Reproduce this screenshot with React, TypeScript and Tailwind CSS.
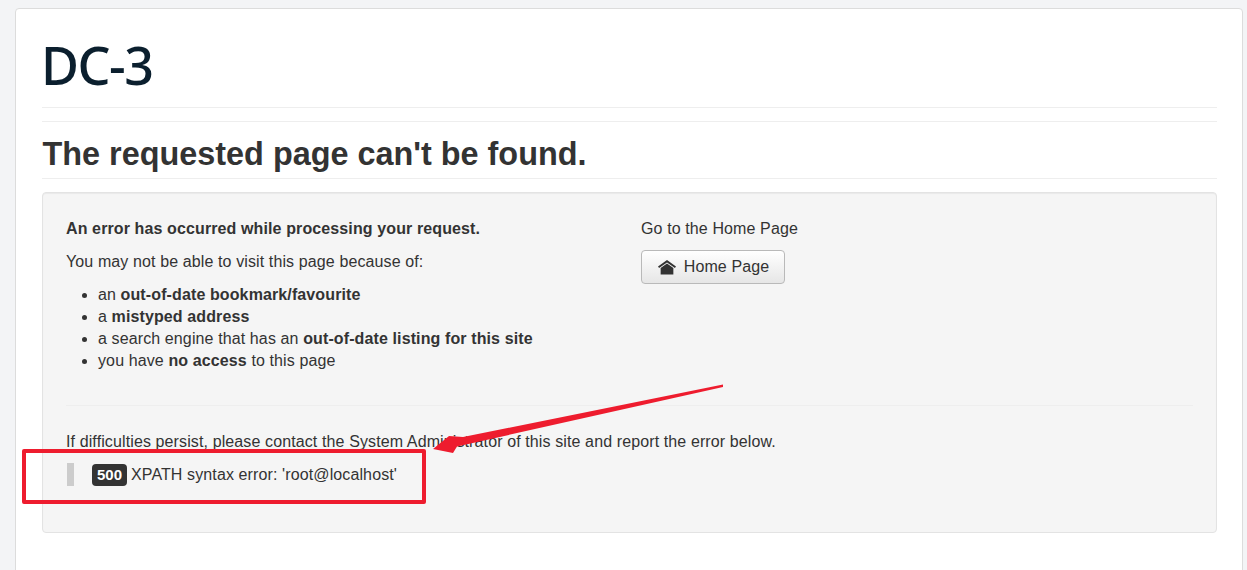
const sans = "font-['Liberation_Sans',Arial,sans-serif]"

function HomeIcon() {
  return (
    <svg width="18" height="15" viewBox="0 0 17 15" preserveAspectRatio="none" className="shrink-0 fill-[#333]">
      <path d="M8.5 0 L17 6.6 L16 8 L8.5 2.4 L1 8 L0 6.6 Z" />
      <path d="M8.5 3.6 L14.5 8 V14.5 H2.5 V8 Z" />
    </svg>
  )
}

function Annotation() {
  return (
    <>
      <div className="absolute left-[22px] top-[449px] h-[55px] w-[404px] rounded-[2px] border-[4px] border-[#ee1c2e]" />
      <svg className="absolute left-0 top-0" width="1247" height="570" viewBox="0 0 1247 570">
        <polygon points="723,384.5 723,387 457,446.5 453,453 433,449 449,436 463,437" fill="#ee1c2e" />
      </svg>
    </>
  )
}

export default function App() {
  return (
    <div className={`relative h-[570px] overflow-hidden bg-[#f3f4f6] pl-[15px] pr-[4px] pt-[8px] text-[#333] ${sans}`}>
      <div className="h-[600px] rounded-[4px] border border-[#dcdcdc] bg-white pl-[26px] pr-[25px] pt-[28px]">
        <div className="h-[71px] border-b border-[#eeeeee]">
          <div className="-ml-[1px] font-['Noto_Sans',sans-serif] text-[52px] font-medium leading-[56px] tracking-[-1.5px] text-[#0b1f2e]">DC-3</div>
        </div>
        <div className="mt-[13px] border-t border-[#eeeeee]">
          <h1 className="h-[57px] border-b border-[#eeeeee] pl-[0.5px] pt-[12px] text-[32.4px] font-bold leading-[40px]">
            The requested page can't be found.
          </h1>
        </div>
        <div className="mt-[13px] h-[341px] rounded-[4px] border border-[#e3e3e3] bg-[#f5f5f5] px-[23px] pt-[25px] text-[16px] leading-[22px] tracking-[0.115px] shadow-[inset_0_1px_1px_rgba(0,0,0,0.05)]">
          <div className="flex">
            <div className="w-[575px]">
              <p className="font-bold">An error has occurred while processing your request.</p>
              <p className="mt-[11px]">You may not be able to visit this page because of:</p>
              <ul className="mt-[11px] list-disc pl-[32px]">
                <li>an <b>out-of-date bookmark/favourite</b></li>
                <li>a <b>mistyped address</b></li>
                <li>a search engine that has an <b>out-of-date listing for this site</b></li>
                <li>you have <b>no access</b> to this page</li>
              </ul>
            </div>
            <div>
              <p>Go to the Home Page</p>
              <button className="mt-[10px] flex h-[34px] w-[144px] items-center justify-center gap-[8px] rounded-[4px] border border-[#b9b9b9] bg-gradient-to-b from-white to-[#e6e6e6] pl-[1px]">
                <HomeIcon />
                Home Page
              </button>
            </div>
          </div>
          <div className="mt-[33px] border-t border-[#eeeeee] pt-[25px]">
            <p>If difficulties persist, please contact the System Administrator of this site and report the error below.</p>
            <div className="ml-[1px] mt-[10px] flex h-[23px] items-center border-l-[7px] border-[#cccccc] pl-[18px]">
              <span className="mr-[4px] flex h-[22px] w-[35px] items-center justify-center rounded-[4px] bg-[#333] text-[15px] font-bold tracking-normal text-white">500</span>
              XPATH syntax error: 'root@localhost'
            </div>
          </div>
        </div>
      </div>
      <Annotation />
    </div>
  )
}
